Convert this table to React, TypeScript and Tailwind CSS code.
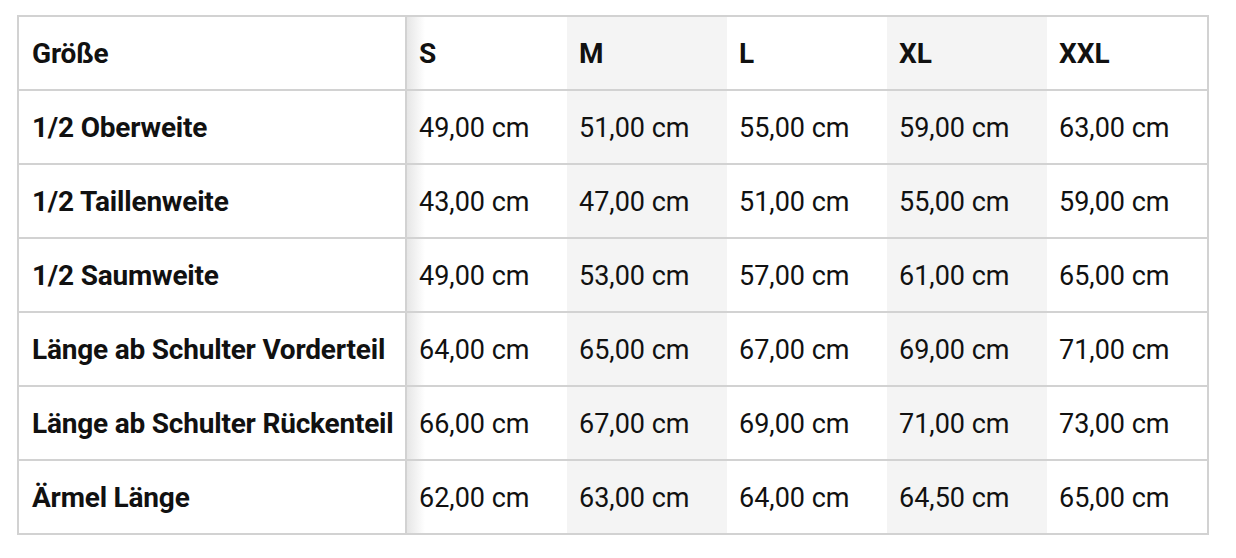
import React from "react";

// Maßtabelle: erste Spalte fix, M und XL leicht hinterlegt

const sizes = ["S", "M", "L", "XL", "XXL"];

const rows = [
  { label: "1/2 Oberweite", values: ["49,00", "51,00", "55,00", "59,00", "63,00"] },
  { label: "1/2 Taillenweite", values: ["43,00", "47,00", "51,00", "55,00", "59,00"] },
  { label: "1/2 Saumweite", values: ["49,00", "53,00", "57,00", "61,00", "65,00"] },
  { label: "Länge ab Schulter Vorderteil", values: ["64,00", "65,00", "67,00", "69,00", "71,00"] },
  { label: "Länge ab Schulter Rückenteil", values: ["66,00", "67,00", "69,00", "71,00", "73,00"] },
  { label: "Ärmel Länge", values: ["62,00", "63,00", "64,00", "64,50", "65,00"] },
];

const cellBg = (i: number) => {
  if (i === 0) return "bg-[linear-gradient(to_right,#e6e6e6,#ffffff_18px)]";
  if (i === 1 || i === 3) return "bg-[#f4f4f4]";
  return "bg-white";
};

const Row = ({
  label,
  cells,
  bold,
  last,
}: {
  label: string;
  cells: string[];
  bold?: boolean;
  last?: boolean;
}) => (
  <div
    className={`grid grid-cols-[388px_repeat(5,160px)] ${
      last ? "h-[72px]" : "h-[74px] border-b-2 border-[#d2d2d2]"
    }`}
  >
    <div className="flex items-center pl-[13px] pt-[2px] border-r-2 border-[#d2d2d2] font-bold text-[28px] tracking-[-0.2px] whitespace-nowrap">
      {label}
    </div>
    {cells.map((c, i) => (
      <div
        key={i}
        className={`flex items-center pl-3 pt-[2px] ${cellBg(i)} ${bold ? "font-bold text-[28px]" : ""}`}
      >
        {c}
      </div>
    ))}
  </div>
);

export default function App() {
  return (
    <div
      className="w-[1236px] h-[558px] bg-white pl-[17px] pt-[15px] text-[#111] text-[27px]"
      style={{ fontFamily: "Roboto, 'Noto Sans', sans-serif" }}
    >
      <div className="w-[1192px] border-2 border-[#d2d2d2]">
        <Row label="Größe" cells={sizes} bold />
        {rows.map((r, i) => (
          <Row
            key={r.label}
            label={r.label}
            cells={r.values.map((v) => `${v} cm`)}
            last={i === rows.length - 1}
          />
        ))}
      </div>
    </div>
  );
}
